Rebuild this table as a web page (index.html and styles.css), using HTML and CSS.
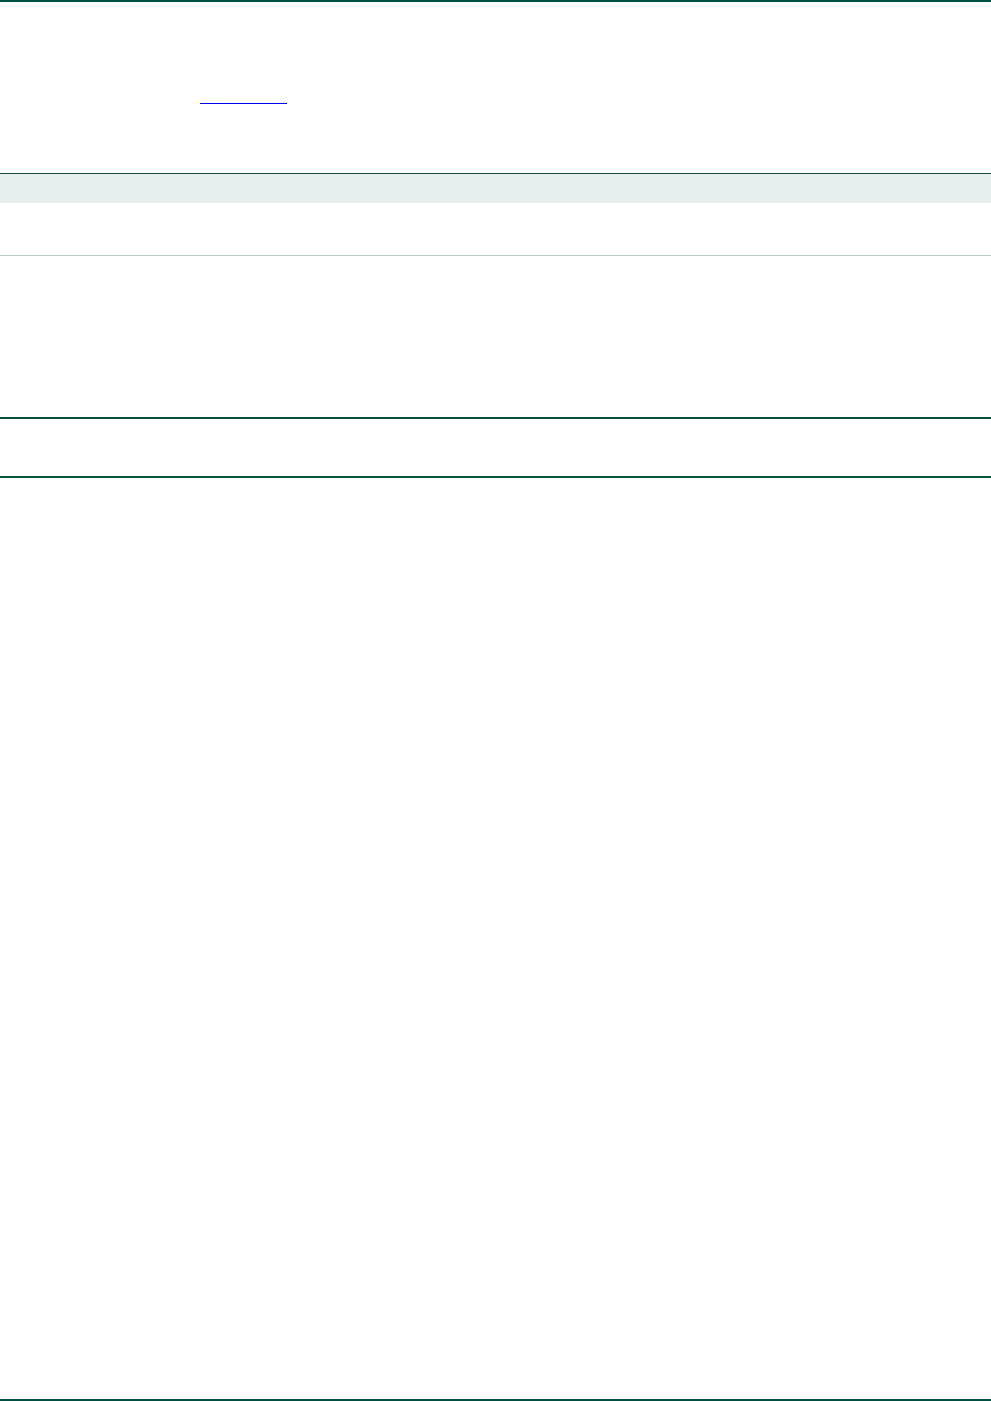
FILE: index.html
```html
<!DOCTYPE html>
<html lang="en">
<head>
    <meta charset="UTF-8">
    <meta name="viewport" content="width=device-width, initial-scale=1.0">
    <title>Document</title>
    <link rel="stylesheet" href="styles.css">
</head>
<body>
    <div class="page">
        <header class="head">
            <a class="link" href="#"></a>
        </header>

        <table class="grid">
            <thead>
                <tr><th></th></tr>
            </thead>
            <tbody>
                <tr class="row-short"><td></td></tr>
                <tr class="row-tall"><td></td></tr>
                <tr class="row-foot"><td></td></tr>
            </tbody>
        </table>

        <div class="filler"></div>
    </div>
</body>
</html>
```

FILE: styles.css
```css
html, body {
    margin: 0;
    padding: 0;
    background: #fff;
}
body {
    font-family: "Liberation Sans", Arial, sans-serif;
    color: #333;
}
.page {
    height: 1401px;
    box-sizing: border-box;
    border-top: 2px solid #00503f;
    border-bottom: 2px solid #00503f;
    display: flex;
    flex-direction: column;
}
.head {
    height: 171px;
    padding-left: 200px;
    box-sizing: border-box;
    padding-top: 101px;
}
.link {
    display: block;
    width: 87px;
    height: 0;
    border-bottom: 1px solid #0000ee;
}
.grid {
    width: 100%;
    border-collapse: collapse;
}
.grid th {
    height: 29px;
    padding: 0;
    background: #e6eded;
    border-top: 1px solid #1d4a3f;
}
.grid td {
    padding: 0;
}
.row-short td {
    height: 52px;
    border-bottom: 1px solid #b7cbc6;
}
.row-tall td {
    height: 161px;
    border-bottom: 2px solid #0e4d40;
}
.row-foot td {
    height: 57px;
    border-bottom: 2px solid #00503f;
}
.filler {
    flex: 1;
}
```
